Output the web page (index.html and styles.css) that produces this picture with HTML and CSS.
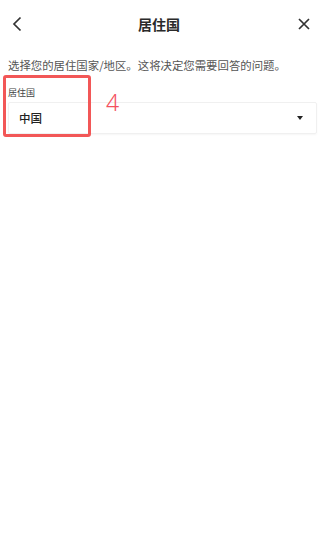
FILE: index.html
```html
<!DOCTYPE html>
<html lang="zh-CN">

<head>
    <meta charset="UTF-8">
    <meta name="viewport" content="width=device-width, initial-scale=1.0">
    <title>居住国</title>
    <link rel="stylesheet" href="styles.css">
</head>

<body>
    <div class="page">
        <div class="nav-bar">
            <span class="nav-btn">
                <svg width="16" height="16" viewBox="0 0 16 16"><path d="M10.5 1.5 L4 8 L10.5 14.5" fill="none" stroke="#333" stroke-width="1.7"/></svg>
            </span>
            <span class="nav-title">居住国</span>
            <span class="nav-btn">
                <svg width="12" height="12" viewBox="0 0 12 12"><path d="M1 1 L11 11 M11 1 L1 11" fill="none" stroke="#333" stroke-width="1.7"/></svg>
            </span>
        </div>

        <div class="content">
            <p class="desc">选择您的居住国家/地区。这将决定您需要回答的问题。</p>
            <div class="field">
                <div class="field-label">居住国</div>
                <div class="select">
                    <span class="select-value">中国</span>
                    <span class="caret"></span>
                </div>
            </div>
        </div>

        <!-- 标注框 -->
        <div class="mark-box"></div>
        <div class="mark-num">4</div>
    </div>
</body>

</html>
```

FILE: styles.css
```css
* {
    box-sizing: border-box;
}

body {
    margin: 0;
    background: #fff;
    font-family: "Noto Sans CJK SC", "Noto Sans", sans-serif;
    color: #333;
}

.page {
    position: relative;
    width: 325px;
    height: 553px;
}

.nav-bar {
    display: flex;
    align-items: center;
    justify-content: space-between;
    height: 48px;
    padding: 0 13px 0 10px;
}

.nav-btn {
    display: flex;
    align-items: center;
    justify-content: center;
    width: 16px;
    height: 16px;
}

.nav-title {
    font-size: 14px;
    font-weight: 700;
    color: #2a2a2a;
    padding-right: 4px;
}

.content {
    padding: 0 8px;
}

.desc {
    margin: 9px 0 0;
    font-size: 11.4px;
    line-height: 16px;
    color: #555;
    white-space: nowrap;
}

.field {
    margin-top: 14px;
}

.field-label {
    font-size: 9px;
    line-height: 12px;
    color: #444;
}

.select {
    display: flex;
    align-items: center;
    justify-content: space-between;
    height: 32px;
    margin-top: 3px;
    padding: 0 13px 0 10px;
    border: 1px solid #f0f0f0;
    border-radius: 2px;
    box-shadow: 0 1px 2px rgba(0, 0, 0, .04);
}

.select-value {
    font-size: 11.5px;
    font-weight: 500;
    color: #222;
}

.caret {
    width: 0;
    height: 0;
    border-left: 3.5px solid transparent;
    border-right: 3.5px solid transparent;
    border-top: 4px solid #222;
}

.mark-box {
    position: absolute;
    left: 3px;
    top: 75px;
    width: 88px;
    height: 62px;
    border: 3px solid #f25757;
    border-radius: 3px;
}

.mark-num {
    position: absolute;
    left: 106px;
    top: 88px;
    font-family: "Noto Sans", sans-serif;
    font-size: 23px;
    line-height: 28px;
    font-weight: 300;
    color: #f4505e;
}
```
